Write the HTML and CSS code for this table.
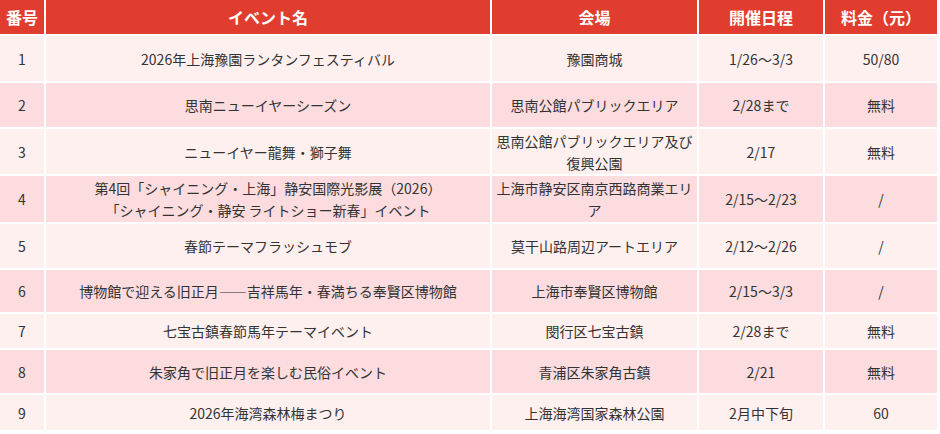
FILE: index.html
```html
<!DOCTYPE html>
<html lang="ja">
<head>
<meta charset="utf-8">
<title>イベント一覧</title>
<link rel="stylesheet" href="styles.css">
</head>
<body>
<div class="table">
  <div class="cell head">番号</div>
  <div class="cell head">イベント名</div>
  <div class="cell head">会場</div>
  <div class="cell head">開催日程</div>
  <div class="cell head">料金（元）</div>

  <div class="cell odd">1</div>
  <div class="cell odd">2026年上海豫園ランタンフェスティバル</div>
  <div class="cell odd">豫園商城</div>
  <div class="cell odd">1/26～3/3</div>
  <div class="cell odd">50/80</div>

  <div class="cell even">2</div>
  <div class="cell even">思南ニューイヤーシーズン</div>
  <div class="cell even">思南公館パブリックエリア</div>
  <div class="cell even">2/28まで</div>
  <div class="cell even">無料</div>

  <div class="cell odd">3</div>
  <div class="cell odd">ニューイヤー龍舞・獅子舞</div>
  <div class="cell odd">思南公館パブリックエリア及び<br>復興公園</div>
  <div class="cell odd">2/17</div>
  <div class="cell odd">無料</div>

  <div class="cell even">4</div>
  <div class="cell even">第4回「シャイニング・上海」静安国際光影展（2026）<br>「シャイニング・静安 ライトショー新春」イベント</div>
  <div class="cell even">上海市静安区南京西路商業エリ<br>ア</div>
  <div class="cell even">2/15～2/23</div>
  <div class="cell even">/</div>

  <div class="cell odd">5</div>
  <div class="cell odd">春節テーマフラッシュモブ</div>
  <div class="cell odd">莫干山路周辺アートエリア</div>
  <div class="cell odd">2/12～2/26</div>
  <div class="cell odd">/</div>

  <div class="cell even">6</div>
  <div class="cell even">博物館で迎える旧正月――吉祥馬年・春満ちる奉賢区博物館</div>
  <div class="cell even">上海市奉賢区博物館</div>
  <div class="cell even">2/15～3/3</div>
  <div class="cell even">/</div>

  <div class="cell odd">7</div>
  <div class="cell odd">七宝古鎮春節馬年テーマイベント</div>
  <div class="cell odd">閔行区七宝古鎮</div>
  <div class="cell odd">2/28まで</div>
  <div class="cell odd">無料</div>

  <div class="cell even">8</div>
  <div class="cell even">朱家角で旧正月を楽しむ民俗イベント</div>
  <div class="cell even">青浦区朱家角古鎮</div>
  <div class="cell even">2/21</div>
  <div class="cell even">無料</div>

  <div class="cell odd">9</div>
  <div class="cell odd">2026年海湾森林梅まつり</div>
  <div class="cell odd">上海海湾国家森林公園</div>
  <div class="cell odd">2月中下旬</div>
  <div class="cell odd">60</div>
</div>
</body>
</html>
```

FILE: styles.css
```css
html, body {
  margin: 0;
  padding: 0;
  background: #ffffff;
}

body {
  font-family: "Noto Sans CJK JP", "Noto Sans", sans-serif;
  color: #333333;
}

.table {
  display: grid;
  width: 937px;
  grid-template-columns: 44px 444px 205px 124px 112px;
  grid-template-rows: 34px 45px 44px 45px 46px 44px 42px 34px 43px 35px;
  gap: 2px;
}

.cell {
  display: flex;
  align-items: center;
  justify-content: center;
  text-align: center;
  font-size: 14px;
  line-height: 22px;
  white-space: nowrap;
  overflow: hidden;
}

.head {
  background: #e13d2e;
  color: #ffffff;
  font-size: 16px;
  font-weight: bold;
}

.odd {
  background: #fff0f0;
}

.even {
  background: #fcdcde;
}
```
